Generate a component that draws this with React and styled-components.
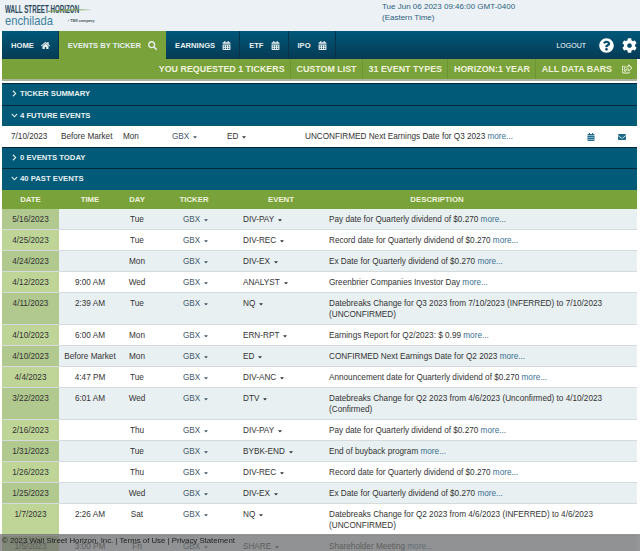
import React from 'react'
import styled, { createGlobalStyle } from 'styled-components'
import {
  FaHome, FaSearch, FaCalendarAlt, FaQuestionCircle, FaCog, FaEnvelope,
  FaChevronRight, FaChevronDown, FaCaretDown, FaRegShareSquare
} from 'react-icons/fa'

const pastEvents = [
  { date: '5/16/2023', day: 'Tue', event: 'DIV-PAY', text: 'Pay date for Quarterly dividend of $0.270', more: true },
  { date: '4/25/2023', day: 'Tue', event: 'DIV-REC', text: 'Record date for Quarterly dividend of $0.270', more: true },
  { date: '4/24/2023', day: 'Mon', event: 'DIV-EX', text: 'Ex Date for Quarterly dividend of $0.270', more: true },
  { date: '4/12/2023', time: '9:00 AM', day: 'Wed', event: 'ANALYST', text: 'Greenbrier Companies Investor Day ', more: true },
  { date: '4/11/2023', time: '2:39 AM', day: 'Tue', event: 'NQ', text: 'Datebreaks Change for Q3 2023 from 7/10/2023 (INFERRED) to 7/10/2023 (UNCONFIRMED)', tall: true },
  { date: '4/10/2023', time: '6:00 AM', day: 'Mon', event: 'ERN-RPT', text: 'Earnings Report for Q2/2023: $ 0.99', more: true },
  { date: '4/10/2023', time: 'Before Market', day: 'Mon', event: 'ED', text: 'CONFIRMED Next Earnings Date for Q2 2023', more: true },
  { date: '4/4/2023', time: '4:47 PM', day: 'Tue', event: 'DIV-ANC', text: 'Announcement date for Quarterly dividend of $0.270', more: true },
  { date: '3/22/2023', time: '6:01 AM', day: 'Wed', event: 'DTV', text: 'Datebreaks Change for Q2 2023 from 4/6/2023 (Unconfirmed) to 4/10/2023 (Confirmed)', tall: true },
  { date: '2/16/2023', day: 'Thu', event: 'DIV-PAY', text: 'Pay date for Quarterly dividend of $0.270', more: true },
  { date: '1/31/2023', day: 'Tue', event: 'BYBK-END', text: 'End of buyback program ', more: true },
  { date: '1/26/2023', day: 'Thu', event: 'DIV-REC', text: 'Record date for Quarterly dividend of $0.270', more: true },
  { date: '1/25/2023', day: 'Wed', event: 'DIV-EX', text: 'Ex Date for Quarterly dividend of $0.270', more: true },
  { date: '1/7/2023', time: '2:26 AM', day: 'Sat', event: 'NQ', text: 'Datebreaks Change for Q2 2023 from 4/6/2023 (INFERRED) to 4/6/2023 (UNCONFIRMED)', tall: true },
  { date: '1/5/2023', time: '3:00 PM', day: 'Fri', event: 'SHARE', text: 'Shareholder Meeting', more: true },
]

const GlobalStyle = createGlobalStyle`
  html, body {
    margin: 0;
    background: #fff;
    overflow: hidden;
  }
  body {
    font-family: "Liberation Sans", Arial, sans-serif;
    font-size: 8.2px;
    color: #333;
  }
`

const Page = styled.div`
  width: 640px;
  height: 551px;
  overflow: hidden;
`

const Header = styled.header`
  height: 31px;
  background: #ebf1f4;
  display: flex;
  justify-content: space-between;
`

const Logo = styled.div`
  padding: 4px 0 0 5px;
  position: relative;
  width: 120px;
`

const LogoTop = styled.div`
  font-weight: bold;
  font-size: 11px;
  line-height: 10px;
  color: #2d4a5c;
  white-space: nowrap;
  transform: scaleX(0.565);
  transform-origin: left center;
`

const LogoBottom = styled.div`
  display: flex;
  align-items: center;
  gap: 16px;
`

const LogoName = styled.span`
  width: 47px;
  font-size: 13px;
  line-height: 13px;
  color: #3d7f9c;
  transform: scaleX(0.86);
  transform-origin: left center;
`

const LogoMark = styled.span`
  font-size: 3.6px;
  font-weight: bold;
  color: #44535d;
  white-space: nowrap;
`

const Swoosh = styled.svg`
  position: absolute;
  left: 48px;
  top: 7px;
`

const Clock = styled.div`
  width: 258px;
  padding-top: 1px;
  font-size: 8px;
  line-height: 11px;
  color: #2b5f80;
`

const NavBar = styled.nav`
  height: 28px;
  margin-left: 2px;
  background: linear-gradient(#00587a, #063a54);
  display: flex;
  align-items: stretch;
`

const NavItem = styled.div`
  display: flex;
  align-items: center;
  gap: 7px;
  padding: ${p => p.$active ? '0 9px' : '0 8px 0 9px'};
  background: ${p => p.$active ? '#7aa23b' : 'transparent'};
  color: #e8f0f0;
  font-size: 7.6px;
  font-weight: bold;
  white-space: nowrap;
  border-right: ${p => p.$active ? 'none' : '1px solid #0a3249'};
  & svg {
    font-size: 9px;
  }
`

const NavRight = styled.div`
  margin-left: auto;
  display: flex;
  align-items: center;
  color: #fff;
  padding-right: 3px;
`

const Logout = styled.span`
  font-size: 7px;
  margin-right: 13px;
`

const HelpIcon = styled(FaQuestionCircle)`
  font-size: 15px;
  margin-right: 8px;
`

const GearIcon = styled(FaCog)`
  font-size: 15px;
`

const SubBar = styled.div`
  height: 22px;
  margin: 0 3px 0 2px;
  background: #7aa23b;
  border-bottom: 2px solid #a9b49a;
  box-sizing: border-box;
  display: flex;
  justify-content: flex-end;
  align-items: stretch;
  color: #eef3dc;
  font-size: 8.9px;
  font-weight: bold;
`

const SubItem = styled.div`
  display: flex;
  align-items: center;
  padding: 0 5px 0 6px;
  white-space: nowrap;
  border-left: ${p => p.$first ? 'none' : '1px solid #6d9434'};
  & svg {
    font-size: 10px;
    margin-left: 10px;
  }
`

const Content = styled.main`
  margin: 2px 3px 0 2px;
`

const SectionBar = styled.div`
  height: ${p => p.$h || 21}px;
  box-sizing: border-box;
  background: #015a78;
  border-top: 1px solid #06283a;
  padding: 0 0 2px 9px;
  color: #e8f0f0;
  font-size: 7.7px;
  font-weight: bold;
  display: flex;
  align-items: center;
  gap: 2px;
  & svg {
    font-size: 7px;
  }
`

const FutureRow = styled.div`
  height: 21px;
  background: #fff;
  display: grid;
  grid-template-columns: 50px 62px 49px 55px 78px 1fr 31px 19px;
  align-items: center;
  padding-left: 9px;
  font-size: 8.2px;
  color: #333;
  white-space: nowrap;
`

const TickerLink = styled.span`
  color: #44586a;
`

const MoreLink = styled.span`
  color: #3a6f90;
`

const MailIcon = styled(FaEnvelope)`
  color: #1d6a8c;
  font-size: 8px;
`

const CalendarIcon = styled(FaCalendarAlt)`
  color: #1d6a8c;
  font-size: 8px;
`

const Caret = styled(FaCaretDown)`
  font-size: 6px;
  margin-left: 3px;
  vertical-align: middle;
`

const TableHead = styled.div`
  height: 19px;
  background: #7aa23b;
  color: #eef3dc;
  font-size: 7.8px;
  font-weight: bold;
  display: grid;
  grid-template-columns: 57px 62px 32px 82px 92px 220px 1fr;
  align-items: center;
  text-align: center;
`

const Row = styled.div`
  display: grid;
  grid-template-columns: 57px 62px 32px 60px 86px 1fr;
  height: ${p => p.$tall ? 32 : 21}px;
  box-sizing: border-box;
  background: ${p => p.$odd ? '#e9f0f2' : '#fff'};
  border-bottom: 1px solid #d5dadd;
  font-size: 8.2px;
  line-height: 11px;
  color: #333;
`

const Cell = styled.div`
  padding-top: 5px;
  text-align: ${p => p.$center ? 'center' : 'left'};
  padding-left: ${p => p.$pad || 0}px;
  white-space: ${p => p.$wrap ? 'normal' : 'pre'};
`

const DateCell = styled(Cell)`
  background: ${p => p.$odd ? '#b1c88e' : '#bfd598'};
  text-align: center;
`

const Footer = styled.footer`
  position: fixed;
  left: 0;
  right: 0;
  bottom: 0;
  height: 17px;
  box-sizing: border-box;
  padding: 1px 0 0 2px;
  background: rgba(110, 110, 110, 0.72);
  color: #222;
  font-size: 7.8px;
  line-height: 12px;
`

const App = () => {
  return (
    <Page>
      <GlobalStyle />
      <Header>
        <Logo>
          <LogoTop>WALL STREET HORIZON</LogoTop>
          <LogoBottom>
            <LogoName>enchilada</LogoName>
            <LogoMark>‹ TMX company</LogoMark>
          </LogoBottom>
          <Swoosh width="46" height="8" viewBox="0 0 46 8">
            <path d="M0 4 C14 2 30 2 45 3 C30 3 14 4 0 5Z" fill="#7f9f5a" />
          </Swoosh>
        </Logo>
        <Clock>Tue Jun 06 2023 09:46:00 GMT-0400<br />(Eastern Time)</Clock>
      </Header>
      <NavBar>
        <NavItem>HOME <FaHome /></NavItem>
        <NavItem $active>EVENTS BY TICKER <FaSearch /></NavItem>
        <NavItem>EARNINGS <FaCalendarAlt /></NavItem>
        <NavItem>ETF <FaCalendarAlt /></NavItem>
        <NavItem>IPO <FaCalendarAlt /></NavItem>
        <NavRight>
          <Logout>LOGOUT</Logout>
          <HelpIcon />
          <GearIcon />
        </NavRight>
      </NavBar>
      <SubBar>
        <SubItem $first>YOU REQUESTED 1 TICKERS</SubItem>
        <SubItem>CUSTOM LIST</SubItem>
        <SubItem>31 EVENT TYPES</SubItem>
        <SubItem>HORIZON:1 YEAR</SubItem>
        <SubItem>ALL DATA BARS <FaRegShareSquare /></SubItem>
      </SubBar>
      <Content>
        <SectionBar $h={22}><FaChevronRight /> TICKER SUMMARY</SectionBar>
        <SectionBar><FaChevronDown /> 4 FUTURE EVENTS</SectionBar>
        <FutureRow>
          <span>7/10/2023</span>
          <span>Before Market</span>
          <span>Mon</span>
          <TickerLink>GBX<Caret /></TickerLink>
          <span>ED<Caret /></span>
          <span>UNCONFIRMED Next Earnings Date for Q3 2023 <MoreLink>more...</MoreLink></span>
          <CalendarIcon />
          <MailIcon />
        </FutureRow>
        <SectionBar><FaChevronRight /> 0 EVENTS TODAY</SectionBar>
        <SectionBar $h={22}><FaChevronDown /> 40 PAST EVENTS</SectionBar>
        <TableHead>
          <span>DATE</span>
          <span>TIME</span>
          <span>DAY</span>
          <span>TICKER</span>
          <span>EVENT</span>
          <span>DESCRIPTION</span>
        </TableHead>
        {pastEvents.map((e, i) => (
          <Row key={i} $odd={i % 2 === 0} $tall={e.tall}>
            <DateCell $odd={i % 2 === 0}>{e.date}</DateCell>
            <Cell $center>{e.time || ''}</Cell>
            <Cell $center>{e.day}</Cell>
            <Cell $pad={30}><TickerLink>GBX<Caret /></TickerLink></Cell>
            <Cell $pad={30}>{e.event}<Caret /></Cell>
            <Cell $pad={30} $wrap>
              {e.text}{e.more && <> <MoreLink>more...</MoreLink></>}
            </Cell>
          </Row>
        ))}
      </Content>
      <Footer>© 2023 Wall Street Horizon, Inc. | Terms of Use | Privacy Statement</Footer>
    </Page>
  )
}

export default App
